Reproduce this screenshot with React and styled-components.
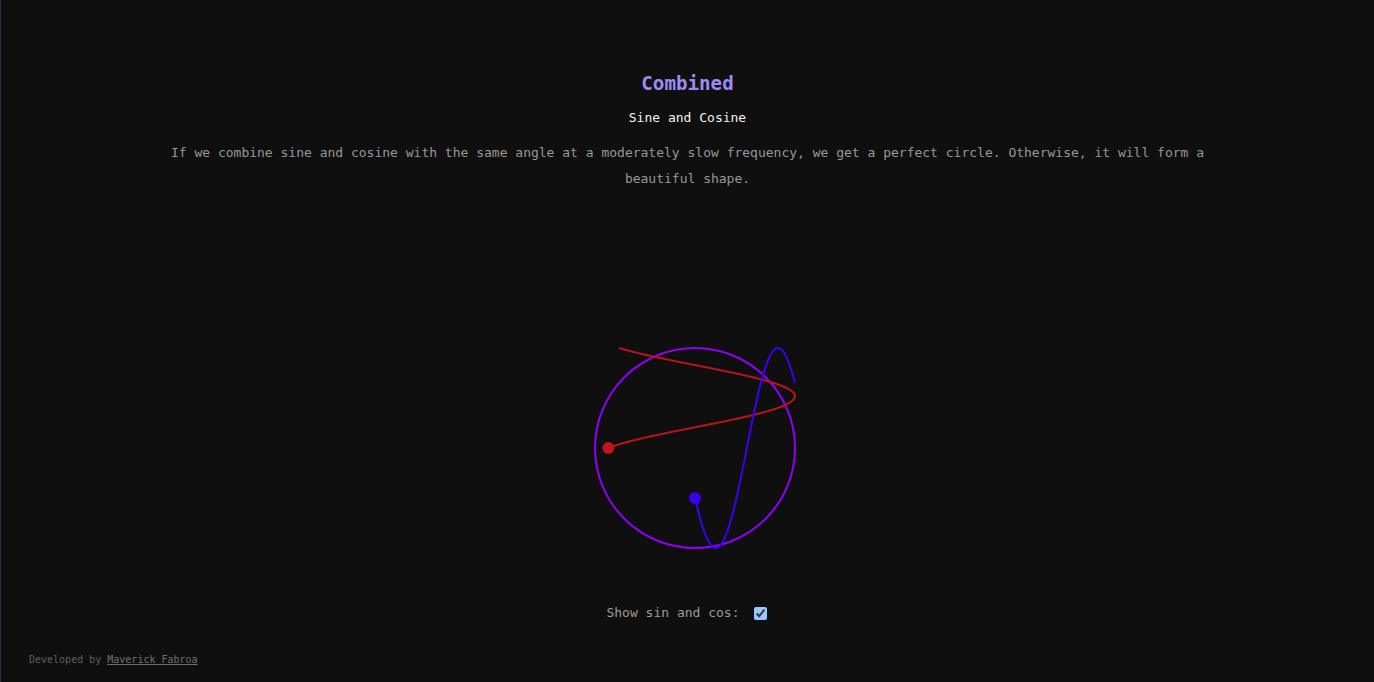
import styled, { createGlobalStyle } from "styled-components";

const GlobalStyle = createGlobalStyle`
  html, body {
    margin: 0;
    padding: 0;
    background: #0f0f0f;
  }
  body {
    font-family: "DejaVu Sans Mono", "Liberation Mono", monospace;
  }
`;

const Page = styled.div`
  min-height: 100vh;
  box-sizing: border-box;
  border-left: 1px solid #28313d;
  display: flex;
  flex-direction: column;
  align-items: center;
  padding-top: 72px;
`;

const Title = styled.h1`
  margin: 0;
  font-size: 19.2px;
  line-height: 24px;
  font-weight: 700;
  color: #9b8cf3;
`;

const Subtitle = styled.h2`
  margin: 14px 0 0;
  font-size: 13px;
  line-height: 16px;
  font-weight: 400;
  color: #f2f2f2;
`;

const Description = styled.p`
  margin: 14px 0 0;
  max-width: 1060px;
  font-size: 13px;
  line-height: 26px;
  color: #989898;
  text-align: center;
`;

const Canvas = styled.svg`
  display: block;
  margin-top: 106px;
  width: 301px;
  height: 300px;
`;

const Controls = styled.label`
  display: flex;
  align-items: center;
  margin-top: 7px;
  margin-right: 2px;
  font-size: 13px;
  line-height: 16px;
  color: #9c9c9c;
`;

const Check = styled.input`
  margin: 0 0 0 14px;
  width: 13px;
  height: 13px;
  color-scheme: dark;
`;

const Footer = styled.footer`
  align-self: flex-start;
  margin: 33px 0 0 28px;
  font-size: 10px;
  line-height: 12px;
  color: #5f5f5f;

  a {
    color: #6f6f6f;
  }
`;

const CX = 158;
const CY = 150;
const R = 100;
const ANGLE = (5 * Math.PI) / 6;
const STEP = 0.0505;
const TRAIL = 100;

function trail(kind) {
  const pts = [];
  for (let d = 0; d <= TRAIL; d++) {
    const a = ANGLE - STEP * d;
    if (kind === "cos") {
      pts.push(`${(CX + R * Math.cos(a)).toFixed(2)},${(CY - d).toFixed(2)}`);
    } else {
      pts.push(`${(CX + d).toFixed(2)},${(CY + R * Math.sin(a)).toFixed(2)}`);
    }
  }
  return "M" + pts.join(" L");
}

function Wave() {
  const redX = CX + R * Math.cos(ANGLE);
  const blueY = CY + R * Math.sin(ANGLE);
  return (
    <Canvas viewBox="0 0 301 300">
      <circle cx={CX} cy={CY} r={R} fill="none" stroke="#8f00f5" strokeWidth="2" />
      <path d={trail("cos")} fill="none" stroke="#b7141e" strokeWidth="2" />
      <path d={trail("sin")} fill="none" stroke="#3b00ee" strokeWidth="2" />
      <circle cx={redX} cy={CY} r="6" fill="#c0141e" />
      <circle cx={CX} cy={blueY} r="6" fill="#3a00f0" />
    </Canvas>
  );
}

export default function App() {
  return (
    <>
      <GlobalStyle />
      <Page>
        <Title>Combined</Title>
        <Subtitle>Sine and Cosine</Subtitle>
        <Description>
          If we combine sine and cosine with the same angle at a moderately slow
          frequency, we get a perfect circle. Otherwise, it will form a beautiful
          shape.
        </Description>
        <Wave />
        <Controls>
          Show sin and cos:
          <Check type="checkbox" defaultChecked />
        </Controls>
        <Footer>
          Developed by <a href="#">Maverick Fabroa</a>
        </Footer>
      </Page>
    </>
  );
}
